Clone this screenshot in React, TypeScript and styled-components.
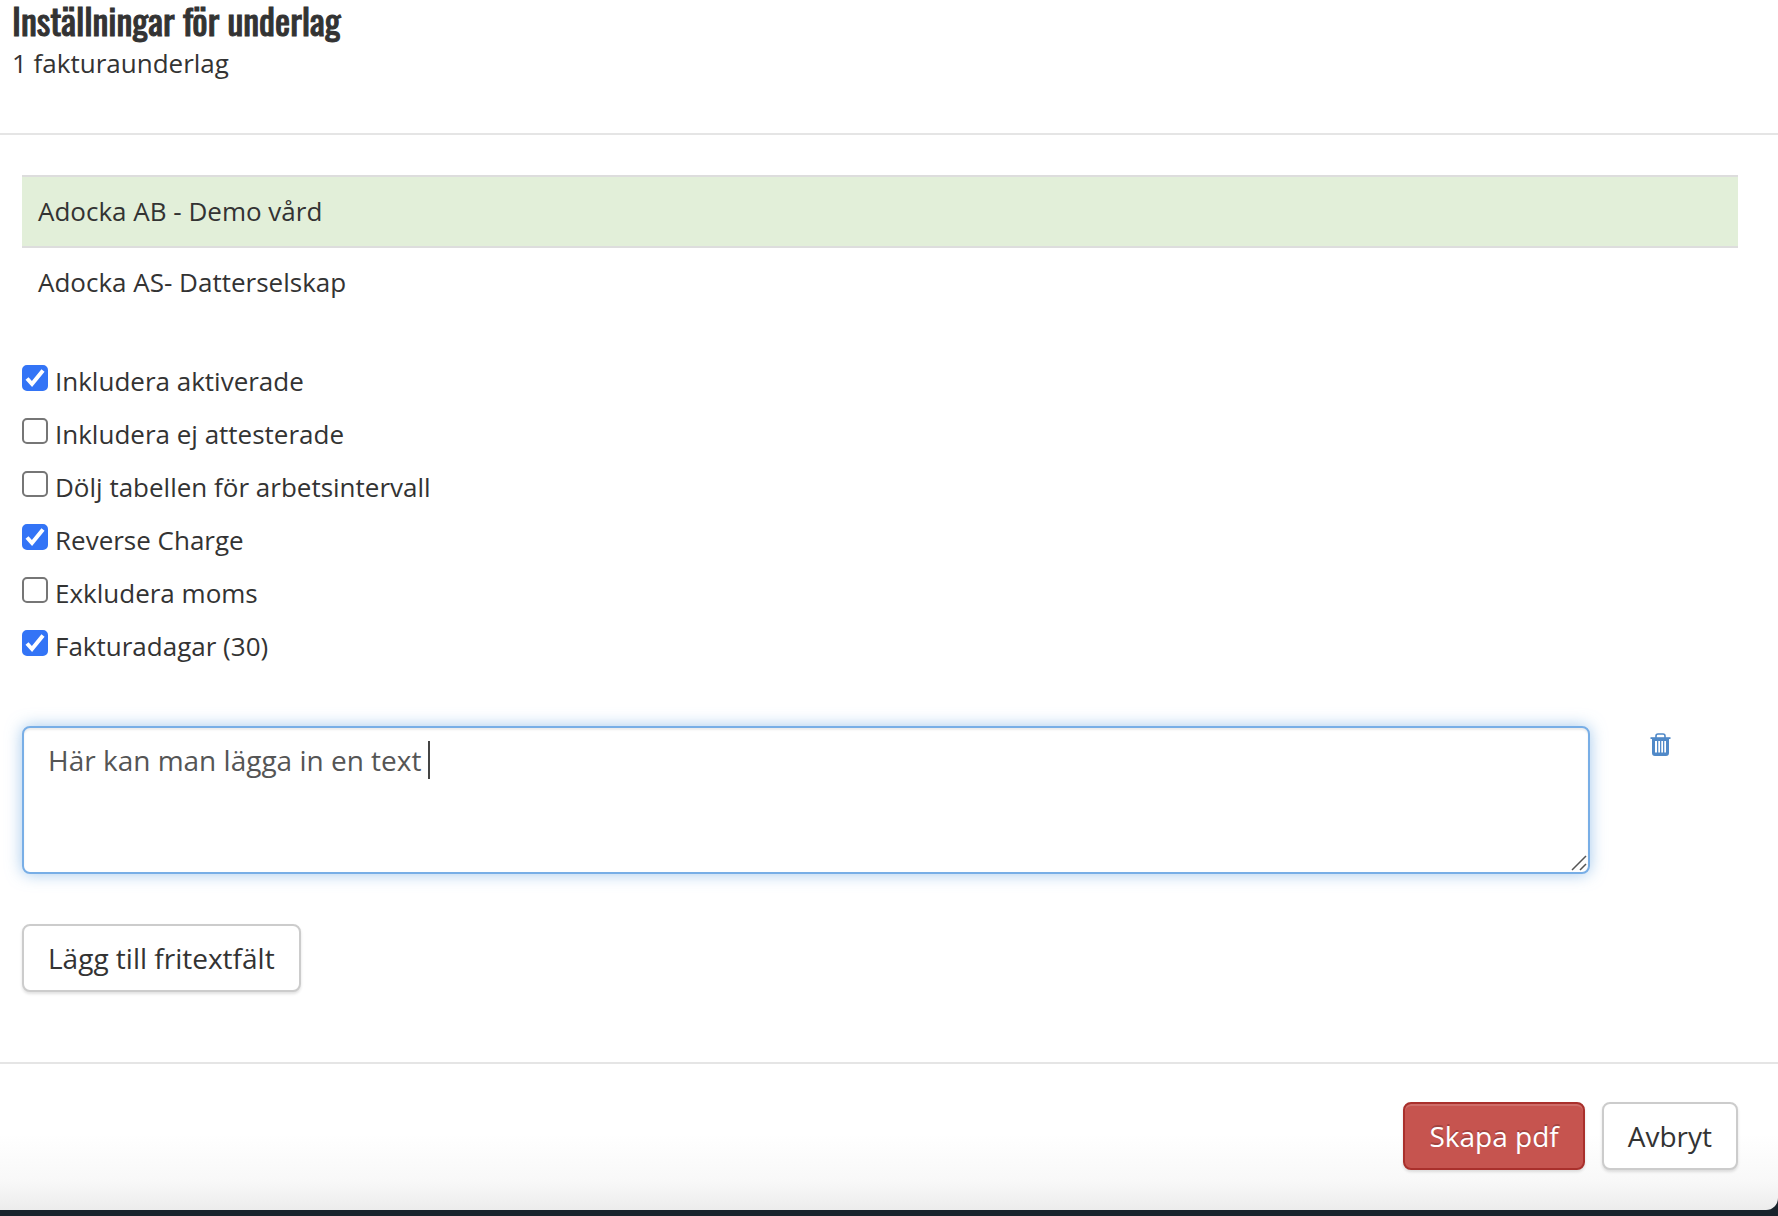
import React, { useState } from "react";
import styled, { createGlobalStyle } from "styled-components";

const GlobalStyle = createGlobalStyle`
  *, *::before, *::after { box-sizing: border-box; }
  html { background: #18222b; }
  body {
    margin: 0;
    color: #333;
    font-family: "Open Sans", "Noto Sans", sans-serif;
    font-size: 26px;
    line-height: 37px;
  }
`;

const Dialog = styled.main`
  background: linear-gradient(to top, #ececec 0, #f8f8f8 28px, #fff 76px);
  border-bottom-right-radius: 12px;
`;

const Header = styled.header`
  padding: 0 12px 51px;
  border-bottom: 2px solid #e5e5e5;
`;

const Title = styled.h1`
  margin: 0;
  padding-bottom: 5px;
  font-family: Oswald, "Liberation Sans Narrow", "Liberation Sans", sans-serif;
  font-size: 36px;
  font-weight: 400;
  -webkit-text-stroke: 1px currentColor;
  line-height: 40px;
  white-space: nowrap;
`;

const Subtitle = styled.p`
  margin: 0;
`;

const Body = styled.div`
  display: flex;
  flex-direction: column;
  align-items: stretch;
  padding: 40px 40px 70px 22px;
`;

const CompanyTable = styled.table`
  width: 100%;
  border-collapse: collapse;
`;

const CompanyRow = styled.tr<{ $selected: boolean }>`
  background: ${(p) => (p.$selected ? "#e2efd9" : "transparent")};
  border-top: ${(p) => (p.$selected ? "2px solid #ddd" : "0")};
  border-bottom: ${(p) => (p.$selected ? "2px solid #ddd" : "0")};
  cursor: pointer;
`;

const CompanyCell = styled.td`
  padding: 16px;
`;

const Options = styled.div`
  display: flex;
  flex-direction: column;
  align-items: flex-start;
  gap: 16px;
  margin: 46px 0 61px;
`;

const Option = styled.label`
  display: flex;
  align-items: flex-start;
  gap: 7px;
`;

const CheckFrame = styled.span`
  display: grid;
  width: 26px;
  height: 26px;
  margin-top: 2px;

  > * {
    grid-area: 1 / 1;
  }

  svg {
    pointer-events: none;
  }
`;

const CheckInput = styled.input`
  appearance: none;
  width: 26px;
  height: 26px;
  margin: 0;
  border: 2px solid #767676;
  border-radius: 5px;
  background: #fff;

  &:checked {
    border-color: #3374f6;
    background: #3374f6;
  }
`;

const FreeTextRow = styled.div`
  display: grid;
  grid-template-columns: 1fr 88px;
  column-gap: 60px;
  align-items: start;
  margin-bottom: 50px;
`;

const TextFrame = styled.div`
  position: relative;
  display: flex;
`;

const FreeText = styled.textarea`
  width: 100%;
  height: 148px;
  padding: 12px 24px;
  border: 2px solid #78aee6;
  border-radius: 8px;
  outline: none;
  resize: none;
  color: #555;
  background: #fff;
  box-shadow: inset 0 2px 2px rgba(0, 0, 0, 0.075), 0 0 16px rgba(102, 163, 224, 0.6);
  caret-color: transparent;
  font-family: inherit;
  font-size: 28px;
  line-height: 40px;
`;

const Caret = styled.span`
  position: absolute;
  top: 15px;
  left: 406px;
  width: 2px;
  height: 38px;
  background: #444;
  pointer-events: none;
`;

const Grip = styled.svg`
  position: absolute;
  right: 3px;
  bottom: 3px;
  pointer-events: none;
`;

const IconButton = styled.button`
  display: flex;
  justify-self: start;
  margin-top: 7px;
  padding: 0;
  border: 0;
  background: none;
  color: #5089c8;
  cursor: pointer;
`;

const Button = styled.button<{ $danger?: boolean }>`
  align-self: flex-start;
  padding: 12px 24px;
  border: 2px solid ${(p) => (p.$danger ? "#a9302c" : "#ccc")};
  border-radius: 8px;
  background: ${(p) => (p.$danger ? "#c6544f" : "#fff")};
  color: ${(p) => (p.$danger ? "#fff" : "#333")};
  box-shadow: ${(p) => (p.$danger ? "inset 0 2px 0 rgba(255, 255, 255, 0.15), " : "")}0 2px 3px rgba(0, 0, 0, 0.12);
  text-shadow: ${(p) => (p.$danger ? "0 -2px 0 rgba(0, 0, 0, 0.2)" : "none")};
  font-family: inherit;
  font-size: 28px;
  line-height: 40px;
  white-space: nowrap;
  cursor: pointer;
`;

const Footer = styled.footer`
  display: flex;
  justify-content: flex-end;
  gap: 17px;
  padding: 38px 40px 40px;
  border-top: 2px solid #e5e5e5;
`;

const Page = styled.div`
  padding-bottom: 6px;
`;

const companies = ["Adocka AB - Demo vård", "Adocka AS- Datterselskap"];

const initialOptions = [
  { label: "Inkludera aktiverade", checked: true },
  { label: "Inkludera ej attesterade", checked: false },
  { label: "Dölj tabellen för arbetsintervall", checked: false },
  { label: "Reverse Charge", checked: true },
  { label: "Exkludera moms", checked: false },
  { label: "Fakturadagar (30)", checked: true },
];

function TrashIcon() {
  return (
    <svg width="21" height="24" viewBox="0 0 21 24" aria-hidden="true">
      <path d="M6 5V3q0-2 2-2h5q2 0 2 2v2" fill="none" stroke="currentColor" strokeWidth="1.6" />
      <path d="M0.5 4.2h20v1.8h-20z" fill="currentColor" />
      <path
        fillRule="evenodd"
        fill="currentColor"
        d="M2 6h17v14q0 3-3 3H5q-3 0-3-3zM5 8v11.500h2V8zM8.300 8v11.500h1.700V8zM11.300 8v11.500h1.700V8zM14.300 8v11.500h1.700V8z"
      />
    </svg>
  );
}

export default function App() {
  const [selected, setSelected] = useState(0);
  const [options, setOptions] = useState(initialOptions);
  const [text, setText] = useState("Här kan man lägga in en text ");

  const toggle = (index: number) =>
    setOptions(options.map((o, i) => (i === index ? { ...o, checked: !o.checked } : o)));

  return (
    <Page>
      <GlobalStyle />
      <Dialog>
        <Header>
          <Title>Inställningar för underlag</Title>
          <Subtitle>1 fakturaunderlag</Subtitle>
        </Header>
        <Body>
          <CompanyTable>
            <tbody>
              {companies.map((name, i) => (
                <CompanyRow key={name} $selected={i === selected} onClick={() => setSelected(i)}>
                  <CompanyCell>{name}</CompanyCell>
                </CompanyRow>
              ))}
            </tbody>
          </CompanyTable>
          <Options>
            {options.map((o, i) => (
              <Option key={o.label}>
                <CheckFrame>
                  <CheckInput type="checkbox" checked={o.checked} onChange={() => toggle(i)} />
                  {o.checked && (
                    <svg width="26" height="26" viewBox="0 0 26 26" aria-hidden="true">
                      <path d="M5 13.500l5 5.500L21 5.500" fill="none" stroke="#fff" strokeWidth="4" />
                    </svg>
                  )}
                </CheckFrame>
                <span>{o.label}</span>
              </Option>
            ))}
          </Options>
          <FreeTextRow>
            <TextFrame>
              <FreeText aria-label="Fritext" value={text} onChange={(e) => setText(e.target.value)} />
              <Caret />
              <Grip width="16" height="16" viewBox="0 0 16 16" aria-hidden="true">
                <path d="M1 15L15 1M9 15l6-6" stroke="#555" strokeWidth="1.500" />
              </Grip>
            </TextFrame>
            <IconButton type="button" aria-label="Ta bort">
              <TrashIcon />
            </IconButton>
          </FreeTextRow>
          <Button type="button">Lägg till fritextfält</Button>
        </Body>
        <Footer>
          <Button type="button" $danger>
            Skapa pdf
          </Button>
          <Button type="button">Avbryt</Button>
        </Footer>
      </Dialog>
    </Page>
  );
}
